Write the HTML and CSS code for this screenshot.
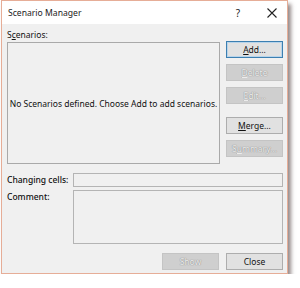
FILE: index.html
```html
<!DOCTYPE html>
<html lang="en">
<head>
    <meta charset="UTF-8">
    <meta name="viewport" content="width=device-width, initial-scale=1.0">
    <title>Scenario Manager</title>
    <link rel="stylesheet" href="styles.css">
</head>
<body>
    <div class="dialog">
        <div class="title-bar">
            <span class="title">Scenario Manager</span>
            <span class="help">?</span>
            <svg class="close-icon" width="10" height="10" viewBox="0 0 10 10">
                <path d="M0.5 0.5 L9.5 9.5 M9.5 0.5 L0.5 9.5" stroke="#222" stroke-width="1.1" fill="none"/>
            </svg>
        </div>

        <div class="dialog-body">
            <div class="label">S<u>c</u>enarios:</div>

            <div class="main-row">
                <div class="listbox">No Scenarios defined. Choose Add to add scenarios.</div>
                <div class="side-buttons">
                    <button class="button default"><u>A</u>dd...</button>
                    <button class="button disabled"><u>D</u>elete</button>
                    <button class="button disabled"><u>E</u>dit...</button>
                    <button class="button spaced"><u>M</u>erge...</button>
                    <button class="button disabled">S<u>u</u>mmary...</button>
                </div>
            </div>

            <div class="fields">
                <div class="field-label">Changing cells:</div>
                <div class="input"></div>
                <div class="field-label">Comment:</div>
                <div class="textarea"></div>
            </div>

            <div class="footer">
                <button class="button disabled">Show</button>
                <button class="button">Close</button>
            </div>
        </div>
    </div>
</body>
</html>
```

FILE: styles.css
```css
/* Page */
body {
    margin: 0;
    background-color: #ffffff;
    font-family: "Noto Sans", "Open Sans", sans-serif;
    font-size: 8.5px;
    color: #111;
}

/* Dialog window */
.dialog {
    width: 285px;
    margin-left: 1px;
    border: 1px solid #e6ad97;
    background-color: #f0f0f0;
    box-shadow: 3px 4px 4px rgba(60, 40, 40, 0.55);
}

.title-bar {
    display: flex;
    align-items: center;
    height: 23px;
    padding: 0 10px 0 6px;
    background-color: #ffffff;
}

.title {
    flex: 1;
    font-size: 8.6px;
    color: #222;
}

.help {
    margin-right: 27px;
    font-size: 10px;
    color: #222;
}

.close-icon {
    display: block;
}

.dialog-body {
    padding: 4px 4px 3px 5px;
}

.label {
    height: 13px;
    line-height: 13px;
}

/* Scenario list and side buttons */
.main-row {
    display: flex;
    gap: 6px;
}

.listbox {
    display: flex;
    align-items: center;
    justify-content: center;
    width: 211px;
    height: 120px;
    margin-top: 1px;
    border: 1px solid #a9a9a9;
    background-color: #f0f0f0;
    white-space: nowrap;
}

.side-buttons {
    display: flex;
    flex-direction: column;
    gap: 6px;
}

.side-buttons .spaced {
    margin-top: 7px;
}

/* Buttons */
.button {
    width: 57px;
    height: 17px;
    padding: 0;
    border: 1px solid #adadad;
    background-color: #e1e1e1;
    font-family: inherit;
    font-size: 8.5px;
    color: #111;
    line-height: 15px;
}

.button.default {
    border-color: #3c7fb1;
    box-shadow: inset 0 0 0 1px #b8d4ea;
}

.button.disabled {
    border-color: #c4c4c4;
    background-color: #cfcfcf;
    color: #ececec;
    text-shadow: 0 0 1px #888, 0 0 1px #999;
}

/* Changing cells / comment */
.fields {
    display: grid;
    grid-template-columns: 66px 1fr;
    row-gap: 3px;
    margin-top: 9px;
}

.field-label {
    line-height: 14px;
    white-space: nowrap;
    font-weight: 500;
}

.input {
    height: 12px;
    border: 1px solid #b4b4b4;
    background-color: #f0f0f0;
}

.textarea {
    height: 52px;
    border: 1px solid #b4b4b4;
    background-color: #f0f0f0;
}

.footer {
    display: flex;
    justify-content: flex-end;
    gap: 7px;
    margin-top: 9px;
}
```
